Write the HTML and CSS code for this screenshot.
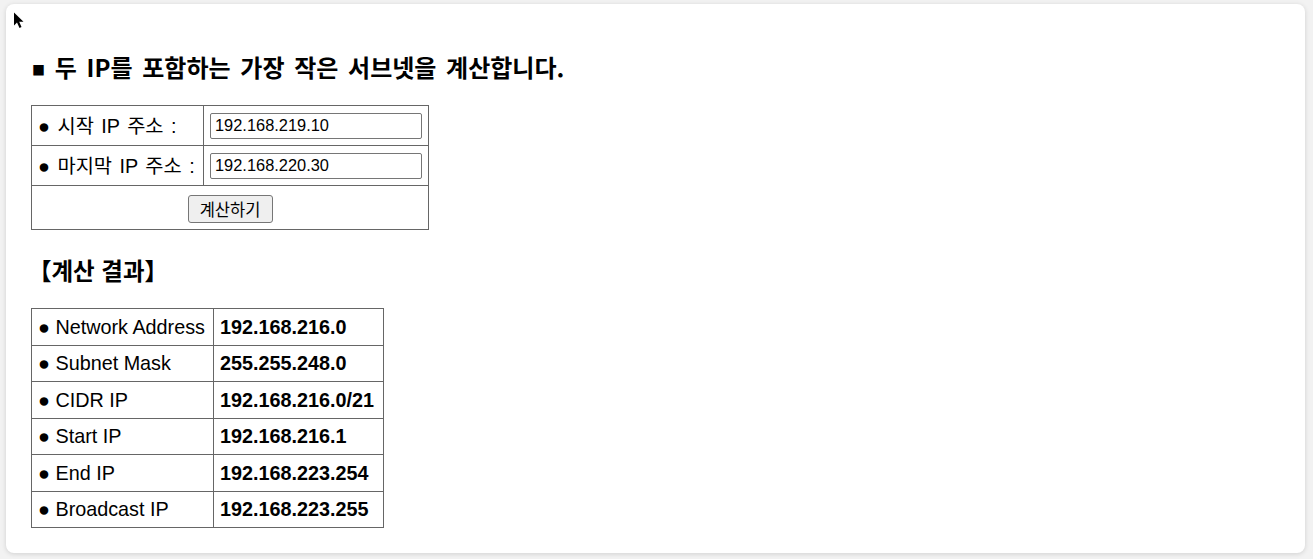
FILE: index.html
```html
<!DOCTYPE html>
<html lang="ko">
<head>
<meta charset="utf-8">
<title>서브넷 계산기</title>
<link rel="stylesheet" href="styles.css">
</head>
<body>
<div class="card">
  <h2 class="title"><span class="sq">■</span> 두 IP를 포함하는 가장 작은 서브넷을 계산합니다.</h2>
  <table class="form-table">
    <tr>
      <td class="label">● 시작 IP 주소 :</td>
      <td class="field"><input class="ip-input" type="text" value="192.168.219.10"></td>
    </tr>
    <tr>
      <td class="label">● 마지막 IP 주소 :</td>
      <td class="field"><input class="ip-input" type="text" value="192.168.220.30"></td>
    </tr>
    <tr>
      <td class="action" colspan="2"><button class="calc-btn" type="button">계산하기</button></td>
    </tr>
  </table>
  <h3 class="result-title">【계산 결과】</h3>
  <table class="result-table">
    <tr><td class="rlabel">● Network Address</td><td class="rvalue">192.168.216.0</td></tr>
    <tr><td class="rlabel">● Subnet Mask</td><td class="rvalue">255.255.248.0</td></tr>
    <tr><td class="rlabel">● CIDR IP</td><td class="rvalue">192.168.216.0/21</td></tr>
    <tr><td class="rlabel">● Start IP</td><td class="rvalue">192.168.216.1</td></tr>
    <tr><td class="rlabel">● End IP</td><td class="rvalue">192.168.223.254</td></tr>
    <tr><td class="rlabel">● Broadcast IP</td><td class="rvalue">192.168.223.255</td></tr>
  </table>
  <svg class="cursor" width="13" height="17" viewBox="0 0 13 17"><path d="M1 0.5 L1 13.5 L4 10.5 L6.5 16 L8.5 15 L6.2 9.8 L10.5 9.8 Z" fill="#000"/></svg>
</div>
</body>
</html>
```

FILE: styles.css
```css
html, body {
  margin: 0;
  padding: 0;
}
body {
  background: #f2f2f2;
  padding: 4px 8px 6px 6px;
  font-family: "Liberation Sans", "Noto Sans CJK KR", sans-serif;
  color: #000;
}
.card {
  position: relative;
  background: #fff;
  border-radius: 8px;
  box-shadow: 0 1px 5px rgba(0, 0, 0, 0.14);
  height: 549px;
  box-sizing: border-box;
  padding: 48px 25px 0 25px;
}
.cursor {
  position: absolute;
  left: 7px;
  top: 8px;
}
.title {
  margin: 0 0 20px 1px;
  font-family: "Noto Sans CJK KR", "Liberation Sans", sans-serif;
  font-size: 24px;
  line-height: 30px;
  font-weight: 700;
  word-spacing: 3px;
  white-space: nowrap;
}
.sq {
  font-size: 13px;
  vertical-align: 2px;
}
table {
  border-collapse: collapse;
}
td {
  border: 1px solid #666;
  padding: 0 6px;
  font-size: 19.8px;
  line-height: 24px;
}
.form-table .label {
  width: 159px;
  height: 39px;
  white-space: nowrap;
  word-spacing: 2px;
}
.form-table .field {
  width: 212px;
}
.ip-input {
  display: block;
  box-sizing: border-box;
  width: 212px;
  height: 26px;
  margin: 0;
  padding: 0 4px;
  border: 1px solid #767676;
  border-radius: 2px;
  font-family: "Liberation Sans", sans-serif;
  font-size: 16.4px;
  color: #000;
}
.form-table .action {
  text-align: center;
  height: 43px;
}
.calc-btn {
  width: 85px;
  height: 28px;
  margin-top: 2px;
  padding: 0;
  background: #efefef;
  border: 1px solid #767676;
  border-radius: 3px;
  font-family: "Noto Sans CJK KR", sans-serif;
  font-size: 16.5px;
  color: #000;
}
.result-title {
  margin: 26px 0 24px -3px;
  font-family: "Noto Sans CJK KR", "Liberation Sans", sans-serif;
  font-size: 23.5px;
  line-height: 28px;
  font-weight: 700;
}
.result-table td {
  height: 35.5px;
}
.result-table .rlabel {
  width: 169px;
  white-space: nowrap;
}
.result-table .rvalue {
  width: 157px;
  font-weight: 700;
  white-space: nowrap;
}
```
